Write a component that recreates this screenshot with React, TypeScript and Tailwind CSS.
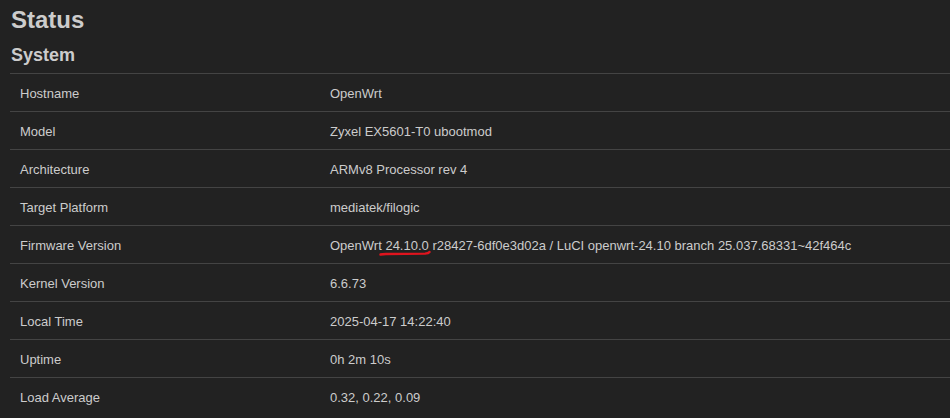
import React from "react";

const rows: [string, React.ReactNode][] = [
  ["Hostname", "OpenWrt"],
  ["Model", "Zyxel EX5601-T0 ubootmod"],
  ["Architecture", "ARMv8 Processor rev 4"],
  ["Target Platform", "mediatek/filogic"],
  [
    "Firmware Version",
    <>
      OpenWrt{" "}
      <span className="relative">
        24.10.0
        <svg
          className="absolute left-[-6px] top-[12px]"
          width="52"
          height="7"
          viewBox="0 0 52 7"
        >
          <path
            d="M1.5 4.5 Q3 4 7 4 L46 3.6 Q49.5 3.4 50.5 2"
            stroke="#e0141e"
            strokeWidth="2.4"
            fill="none"
            strokeLinecap="round"
          />
        </svg>
      </span>{" "}
      r28427-6df0e3d02a / LuCI openwrt-24.10 branch 25.037.68331~42f464c
    </>,
  ],
  ["Kernel Version", "6.6.73"],
  ["Local Time", "2025-04-17 14:22:40"],
  ["Uptime", "0h 2m 10s"],
  ["Load Average", "0.32, 0.22, 0.09"],
];

export default function App() {
  return (
    <div
      className="w-[950px] h-[418px] overflow-hidden bg-[#222222] text-[#cccccc]"
      style={{ fontFamily: '"Liberation Sans", Arial, sans-serif' }}
    >
      <div className="pl-[10px] pt-[5px]">
        <h1 className="text-[24px] leading-[29px] font-bold text-[#cccccc] pl-px">Status</h1>
        <h2 className="mt-[10px] text-[18px] leading-[22px] font-bold text-[#cccccc] pl-px">System</h2>
        <div className="mt-[7px]">
          {rows.map(([k, v], i) => (
            <div
              key={i}
              className="flex h-[38px] items-center pt-[2px] border-t border-[#444444] text-[13px]"
            >
              <div className="w-[320px] pl-[10px]">{k}</div>
              <div className="flex-1 whitespace-nowrap">{v}</div>
            </div>
          ))}
        </div>
      </div>
    </div>
  );
}
